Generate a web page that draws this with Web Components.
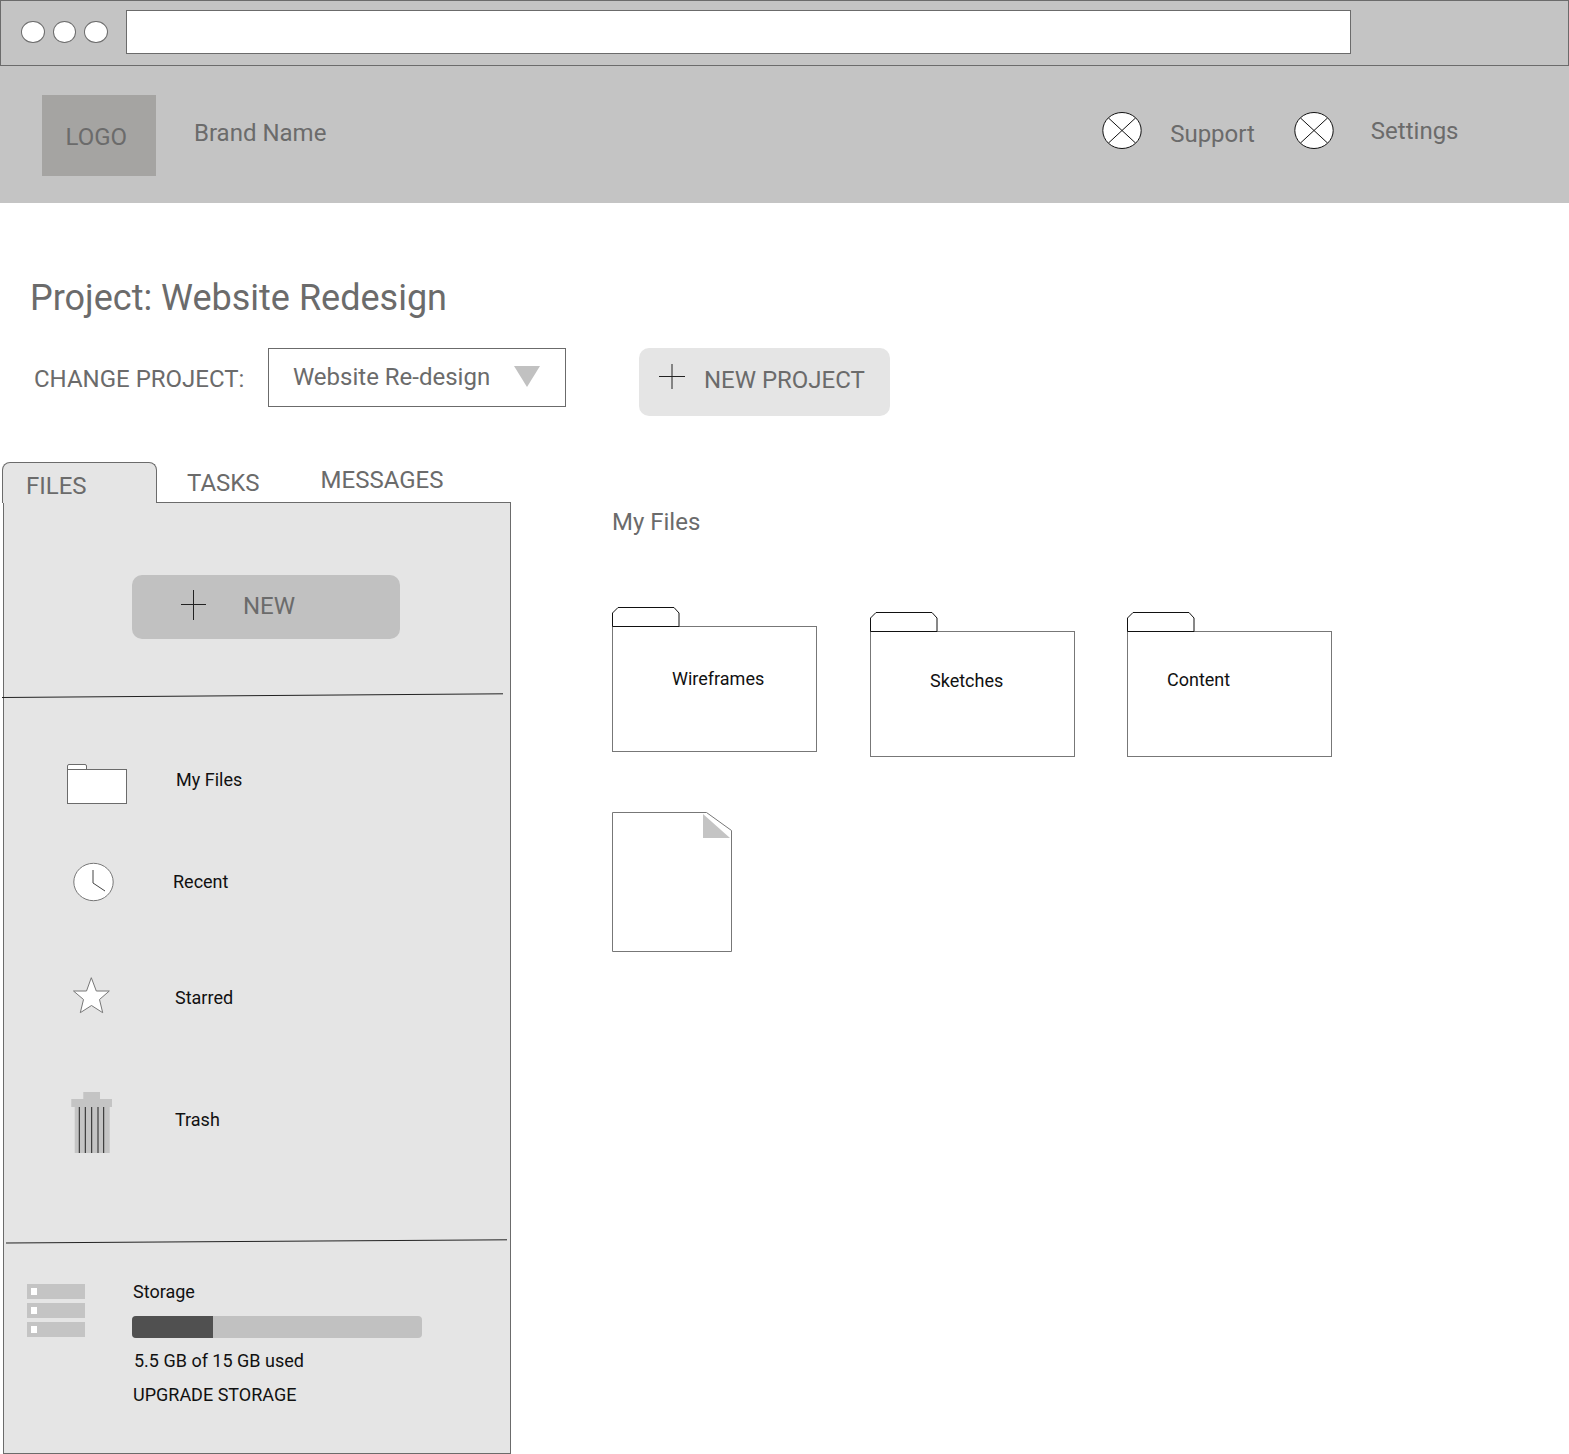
<!DOCTYPE html>
<html lang="en">
<head>
<meta charset="utf-8">
<title>Project: Website Redesign</title>
<style>
    html, body { margin: 0; padding: 0; background: #fff; }
    body { font-family: Roboto, "Liberation Sans", sans-serif; color: #6b6b6b; width: 1569px; height: 1454px; overflow: hidden; }
    .content { display: flex; align-items: flex-start; }
</style>
</head>
<body>
<wf-browser-bar></wf-browser-bar>
<wf-site-header></wf-site-header>
<wf-project-bar title-text="Project: Website Redesign" current="Website Re-design"></wf-project-bar>
<div class="content">
    <wf-files-panel>
        <wf-nav-item label="My Files" icon="folder" style="--top:0px;--left:63px;--w:61px;--h:41px;--gap:48px;--label-top:5px"></wf-nav-item>
        <wf-nav-item label="Recent" icon="clock" style="--top:57px;--left:69px;--w:42px;--h:40px;--gap:58px;--label-top:9px"></wf-nav-item>
        <wf-nav-item label="Starred" icon="star" style="--top:75px;--left:69px;--w:38px;--h:37px;--gap:64px;--label-top:10px"></wf-nav-item>
        <wf-nav-item label="Trash" icon="trash" style="--top:78px;--left:66px;--w:42px;--h:61px;--gap:63px;--label-top:17px"></wf-nav-item>
    </wf-files-panel>
    <wf-file-browser heading="My Files">
        <wf-folder label="Wireframes" style="--top:0px;--gap-right:53px;--label-left:59px;--label-top:41px"></wf-folder>
        <wf-folder label="Sketches" style="--top:5px;--gap-right:52px;--label-left:59px;--label-top:38px"></wf-folder>
        <wf-folder label="Content" style="--top:5px;--gap-right:0px;--label-left:39px;--label-top:37px"></wf-folder>
        <wf-file slot="files"></wf-file>
    </wf-file-browser>
</div>

<script>
// Small helper so every element gets an open shadow root from one html string.
class WfElement extends HTMLElement {
    connectedCallback() {
        if (!this.shadowRoot) {
            this.attachShadow({ mode: "open" });
        }
        this.shadowRoot.innerHTML = this.render();
    }
}

// Fake browser window bar at the very top.
class WfBrowserBar extends WfElement {
    render() {
        return `
            <style>
                :host { display: flex; align-items: flex-start; box-sizing: border-box; height: 66px; background: #c4c4c4; border: 1px solid #6b6b6b; padding: 9px 217px 0 20px; }
                .dots { display: flex; gap: 8px; margin: 11px 18.5px 0 0; }
                .dots span { width: 23.5px; height: 22px; box-sizing: border-box; border-radius: 50%; background: #fff; border: 1px solid #6b6b6b; }
                .address { flex: 1; height: 44px; box-sizing: border-box; background: #fff; border: 1px solid #6b6b6b; }
            </style>
            <div class="dots"><span></span><span></span><span></span></div>
            <div class="address"></div>
        `;
    }
}

class WfSiteHeader extends WfElement {
    render() {
        const icon = `<svg width="40" height="38" viewBox="0 0 40 38"><ellipse cx="20" cy="18.500" rx="19.200" ry="18" fill="#fff" stroke="#111" stroke-width="1"/><path d="M6.500 6 33.500 31M33.500 6 6.500 31" fill="none" stroke="#111" stroke-width="1"/></svg>`;
        return `
            <style>
                :host { display: flex; align-items: flex-start; box-sizing: border-box; height: 137px; background: #c4c4c4; padding: 29px 0 0 42px; color: #6b6b6b; font-size: 24px; line-height: 28px; }
                .logo { width: 114px; height: 81px; box-sizing: border-box; background: #a5a4a2; padding: 28px 0 0 23.5px; }
                .brand { margin: 24px 0 0 38px; flex: 1; }
                svg { display: block; margin-top: 17px; }
                .support { margin: 25px 39px 0 28px; }
                .settings { margin: 22px 110.5px 0 37px; }
            </style>
            <div class="logo">LOGO</div>
            <div class="brand">Brand Name</div>
            ${icon}<div class="support">Support</div>
            ${icon}<div class="settings">Settings</div>
        `;
    }
}

// Page title plus the project select and the new project button.
class WfProjectBar extends WfElement {
    render() {
        return `
            <style>
                :host { display: block; padding: 74px 0 0 30px; color: #6b6b6b; font-size: 24px; }
                h1 { margin: 0; font-size: 36px; font-weight: 400; line-height: 42px; height: 42px; }
                .row { display: flex; align-items: flex-start; margin-top: 29px; line-height: 28px; }
                .label { margin: 17px 24px 0 4px; }
                .select { display: flex; box-sizing: border-box; width: 298px; height: 59px; border: 1px solid #6b6b6b; padding: 14px 0 0 23.5px; }
                .select span { flex: 1; }
                .select svg { margin: 3px 25px 0 0; }
                .new { display: flex; box-sizing: border-box; width: 251px; height: 68px; margin-left: 73px; border-radius: 10px; background: #e5e5e5; padding: 16px 0 0 20px; }
                .new span { margin: 2px 0 0 18.5px; }
            </style>
            <h1>${this.getAttribute("title-text")}</h1>
            <div class="row">
                <div class="label">CHANGE PROJECT:</div>
                <div class="select">
                    <span>${this.getAttribute("current")}</span>
                    <svg width="26" height="21" viewBox="0 0 26 21"><path d="M0 0H26L13 21Z" fill="#c1c1c1"/></svg>
                </div>
                <div class="new">
                    <svg width="26" height="25" viewBox="0 0 26 25"><path d="M0 12.500H26M13 0V25" fill="none" stroke="#222" stroke-width="1"/></svg>
                    <span>NEW PROJECT</span>
                </div>
            </div>
        `;
    }
}

// Left column: tabs, new button, nav list (slotted) and storage meter.
class WfFilesPanel extends WfElement {
    render() {
        return `
            <style>
                :host { display: block; width: 511px; margin-top: 46px; padding-left: 2px; box-sizing: border-box; font-size: 24px; line-height: 28px; color: #6b6b6b; }
                .tabs { display: flex; align-items: flex-start; height: 41px; margin-bottom: -1px; position: relative; }
                .tab-active { box-sizing: border-box; width: 155px; height: 41px; background: #e5e5e5; border: 1px solid #6b6b6b; border-bottom: 0; border-radius: 8px 8px 0 0; padding: 9px 0 0 23px; }
                .tab-tasks { margin: 7px 0 0 30px; }
                .tab-messages { margin: 4px 0 0 61px; }
                .panel { box-sizing: border-box; margin-left: 1px; width: 508px; height: 952px; background: #e5e5e5; border: 1px solid #6b6b6b; }
                .new { display: flex; box-sizing: border-box; width: 268px; height: 64px; margin: 72px 0 0 128px; background: #c1c1c1; border-radius: 10px; padding: 15px 0 0 49px; }
                .new span { margin: 2px 0 0 37px; }
                .rule { display: block; margin-left: -2px; }
                .rule.top { margin-top: 54px; }
                .rule.bottom { margin-top: 0; }
                .nav { height: 540px; padding-top: 65px; box-sizing: border-box; }
            </style>
            <div class="tabs">
                <div class="tab-active">FILES</div>
                <div class="tab-tasks">TASKS</div>
                <div class="tab-messages">MESSAGES</div>
            </div>
            <div class="panel">
                <div class="new">
                    <svg width="25" height="30" viewBox="0 0 25 30"><path d="M0 14.500H25M12.500 0V30" fill="none" stroke="#222" stroke-width="1"/></svg>
                    <span>NEW</span>
                </div>
                <svg class="rule top" width="506" height="6" viewBox="0 0 506 6"><path d="M0 4.500 501 .8" fill="none" stroke="#222" stroke-width="1"/></svg>
                <div class="nav"><slot></slot></div>
                <svg class="rule bottom" width="506" height="6" viewBox="0 0 506 6"><path d="M4 4 505 .8" fill="none" stroke="#222" stroke-width="1"/></svg>
                <wf-storage></wf-storage>
            </div>
        `;
    }
}

const NAV_ICONS = {
    folder: `<svg width="61" height="41" viewBox="0 0 61 41"><path d="M.5 6V2Q.5.5 2 .5H18Q19.500.5 19.500 2V6" fill="#fff" stroke="#6b6b6b"/><rect x=".5" y="5.500" width="59" height="34" fill="#fff" stroke="#6b6b6b"/></svg>`,
    clock: `<svg width="42" height="40" viewBox="0 0 42 40"><ellipse cx="20.500" cy="20" rx="19.700" ry="18.700" fill="#fff" stroke="#777"/><path d="M20 8V21L32 29" fill="none" stroke="#444" stroke-width="1"/></svg>`,
    star: `<svg width="38" height="37" viewBox="0 0 38 37"><path d="M18.300 .7 23.300 14H36.300L26.500 22.500 29.700 35.700 18.500 28.500 7.300 35.700 10.500 22.500 .5 14H13.500Z" fill="#fff" stroke="#777"/></svg>`,
    trash: `<svg width="42" height="61" viewBox="0 0 42 61"><path d="M13.300 0H30V7H42V15H39.700V61H4.700V15H1.300V7H13.300Z" fill="#c4c4c4"/><path d="M9.300 15V61M15.300 15V61M21.700 15V61M28 15V61M33.700 15V61" fill="none" stroke="#222" stroke-width="1"/></svg>`
};

class WfNavItem extends WfElement {
    render() {
        return `
            <style>
                :host { display: flex; align-items: flex-start; margin-top: var(--top); padding-left: var(--left); font-size: 18px; line-height: 22px; color: #111; }
                .icon { width: var(--w); height: var(--h); margin-right: var(--gap); }
                svg { display: block; }
                .label { margin-top: var(--label-top); }
            </style>
            <div class="icon">${NAV_ICONS[this.getAttribute("icon")]}</div>
            <div class="label">${this.getAttribute("label")}</div>
        `;
    }
}

class WfStorage extends WfElement {
    render() {
        return `
            <style>
                :host { display: flex; padding: 36px 0 0 23px; font-size: 18px; line-height: 22px; color: #111; }
                .disks { display: flex; flex-direction: column; gap: 4px; width: 58px; margin: 3px 48px 0 0; }
                .disks div { height: 15px; background: #c4c4c4; padding: 4px 0 0 4px; box-sizing: border-box; }
                .disks i { display: block; width: 6px; height: 7px; background: #fff; }
                .info { width: 290px; }
                .bar { display: flex; height: 22px; margin: 13px 1px 12px -1px; border-radius: 4px; overflow: hidden; background: #c1c1c1; }
                .bar i { width: 81px; background: #505050; }
                .used { margin-left: 1px; }
                .upgrade { margin-top: 12px; }
            </style>
            <div class="disks"><div><i></i></div><div><i></i></div><div><i></i></div></div>
            <div class="info">
                <div>Storage</div>
                <div class="bar"><i></i></div>
                <div class="used">5.5 GB of 15 GB used</div>
                <div class="upgrade">UPGRADE STORAGE</div>
            </div>
        `;
    }
}

// Right column, folders go in the default slot and loose files in "files".
class WfFileBrowser extends WfElement {
    render() {
        return `
            <style>
                :host { display: block; margin: 46px 0 0 101px; }
                h2 { margin: 0; padding-top: 46px; font-size: 24px; font-weight: 400; line-height: 28px; color: #6b6b6b; }
                .folders { display: flex; align-items: flex-start; margin-top: 71px; }
                .files { margin-top: 55px; }
            </style>
            <h2>${this.getAttribute("heading")}</h2>
            <div class="folders"><slot></slot></div>
            <div class="files"><slot name="files"></slot></div>
        `;
    }
}

class WfFolder extends WfElement {
    render() {
        return `
            <style>
                :host { display: block; width: 205px; margin-top: var(--top); margin-right: var(--gap-right); font-size: 18px; line-height: 22px; color: #111; }
                svg { display: block; margin-bottom: -1px; }
                .body { box-sizing: border-box; height: 126px; background: #fff; border: 1px solid #777; padding: var(--label-top) 0 0 var(--label-left); }
            </style>
            <svg width="68" height="20" viewBox="0 0 68 20"><path d="M.5 19.500V6L6 .5H62L67 6V19.500Z" fill="#fff" stroke="#111"/></svg>
            <div class="body">${this.getAttribute("label")}</div>
        `;
    }
}

class WfFile extends WfElement {
    render() {
        return `
            <style>
                :host { display: block; width: 120px; height: 140px; }
                svg { display: block; }
            </style>
            <svg width="120" height="140" viewBox="0 0 120 140">
                <path d="M.5 .5H94.500L119.500 18.500V139.500H.5Z" fill="#fff" stroke="#777"/>
                <path d="M91 2V26H118Z" fill="#c4c4c4"/>
            </svg>
        `;
    }
}

customElements.define("wf-browser-bar", WfBrowserBar);
customElements.define("wf-site-header", WfSiteHeader);
customElements.define("wf-project-bar", WfProjectBar);
customElements.define("wf-files-panel", WfFilesPanel);
customElements.define("wf-nav-item", WfNavItem);
customElements.define("wf-storage", WfStorage);
customElements.define("wf-file-browser", WfFileBrowser);
customElements.define("wf-folder", WfFolder);
customElements.define("wf-file", WfFile);
</script>
</body>
</html>
